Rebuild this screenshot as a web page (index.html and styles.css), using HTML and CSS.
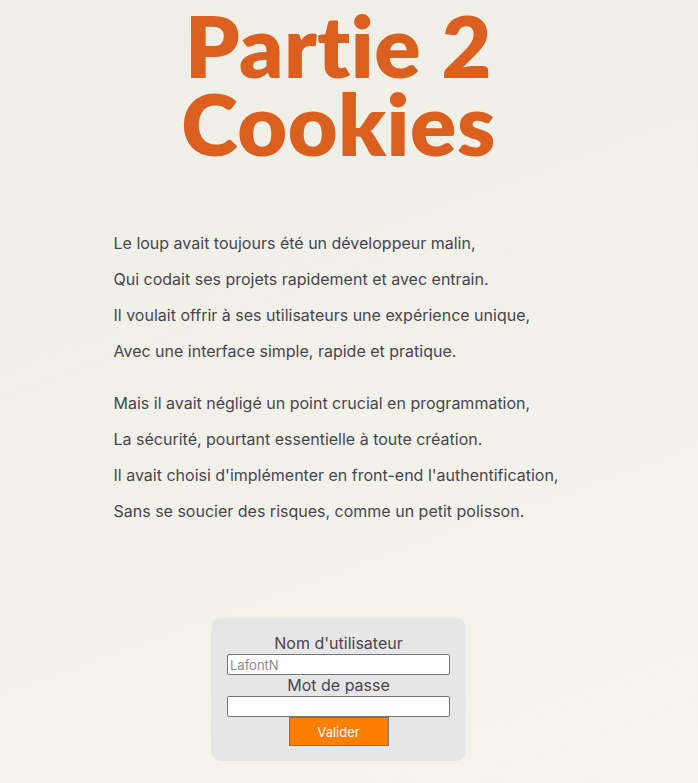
FILE: index.html
```html
<!DOCTYPE html>
<html lang="fr">
<head>
<meta charset="utf-8">
<title>Partie 2 Cookies</title>
<link rel="stylesheet" href="styles.css">
</head>
<body>
<main class="page">
  <h1 class="title">Partie 2<br>Cookies</h1>
  <section class="poem">
    <div class="stanza">
      <p>Le loup avait toujours été un développeur malin,</p>
      <p>Qui codait ses projets rapidement et avec entrain.</p>
      <p>Il voulait offrir à ses utilisateurs une expérience unique,</p>
      <p>Avec une interface simple, rapide et pratique.</p>
    </div>
    <div class="stanza">
      <p>Mais il avait négligé un point crucial en programmation,</p>
      <p>La sécurité, pourtant essentielle à toute création.</p>
      <p>Il avait choisi d'implémenter en front-end l'authentification,</p>
      <p>Sans se soucier des risques, comme un petit polisson.</p>
    </div>
  </section>
  <form class="login" onsubmit="return false">
    <label class="label" for="user">Nom d'utilisateur</label>
    <input class="field" id="user" type="text" placeholder="LafontN">
    <label class="label" for="pass">Mot de passe</label>
    <input class="field" id="pass" type="password">
    <button class="btn" type="submit">Valider</button>
  </form>
</main>
</body>
</html>
```
FILE: styles.css
```css
html, body {
  margin: 0;
  padding: 0;
}
body {
  min-height: 783px;
  background: linear-gradient(160deg, #efeee6 0%, #f3f2ea 60%, #f4f3ec 100%);
  font-family: Inter, "Liberation Sans", sans-serif;
  color: #46464f;
}
.page {
  width: 677px;
  display: flex;
  flex-direction: column;
  align-items: center;
}
.title {
  margin: 6px 0 0;
  font-family: Lato, "Liberation Sans", sans-serif;
  font-weight: 800;
  font-size: 86px;
  line-height: 78px;
  letter-spacing: 0.5px;
  font-variant-ligatures: none;
  font-feature-settings: "liga" 0;
  color: #db5f1e;
  text-align: center;
}
.poem {
  width: 450px;
  margin-top: 63px;
  display: flex;
  flex-direction: column;
  gap: 16px;
}
.stanza p {
  margin: 0;
  font-size: 16px;
  line-height: 36px;
}
.login {
  margin-top: 89px;
  width: 255px;
  box-sizing: border-box;
  padding: 15px 16px 15px;
  background: #e6e6e6;
  border-radius: 10px;
  display: flex;
  flex-direction: column;
  align-items: center;
}
.label {
  font-size: 16px;
  line-height: 21px;
  color: #46464f;
}
.field {
  width: 223px;
  height: 21px;
  box-sizing: border-box;
  margin: 0;
  padding: 1px 2px;
  border: 1px solid #767676;
  border-radius: 2px;
  background: #fff;
  font-family: Inter, sans-serif;
  font-size: 13px;
}
.field::placeholder {
  color: #8a8a8a;
}
.btn {
  width: 100px;
  height: 29px;
  margin: 0;
  border: 1px solid #767676;
  background: #ff7f00;
  color: #fff;
  font-family: Inter, sans-serif;
  font-size: 13px;
}
```
